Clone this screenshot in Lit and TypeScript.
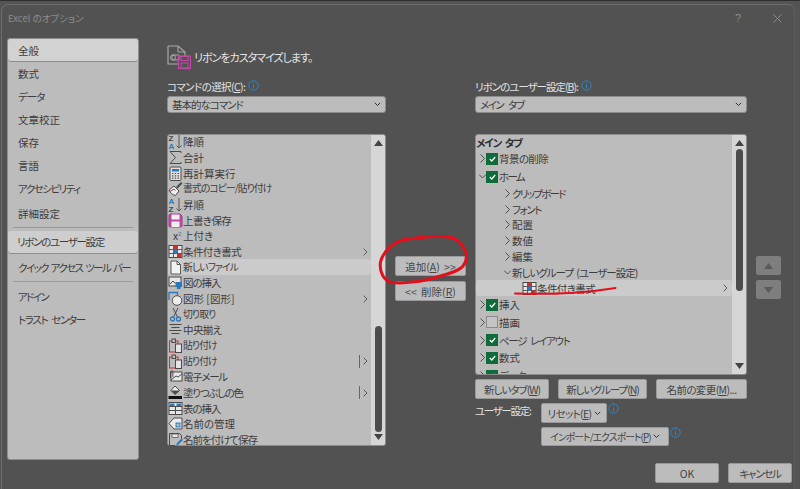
import { LitElement, html, css, svg, nothing } from "lit";
import { customElement } from "lit/decorators.js";

const B = "#2f78b8";
const R = "#c9302c";
const G = "#4a4a4a";
const P = "#c04aa6";

const ico = (body: unknown, w = 15, h = 15) =>
  html`<svg class="ic" width=${w} height=${h} viewBox="0 0 15 15" fill="none">${body}</svg>`;

const letters = (a: string, b: string) => svg`
  <text x="0.5" y="6.5" font-size="8" font-weight="700" font-family="Liberation Sans" fill=${a === "A" ? B : G}>${a}</text>
  <text x="0.5" y="14.5" font-size="8" font-weight="700" font-family="Liberation Sans" fill=${b === "A" ? B : G}>${b}</text>
  <path d="M11 1v13M8.5 11.5 11 14l2.5-2.5" stroke=${G} stroke-width="0.9"/>`;

const condGrid = svg`
  <rect x="1" y="1.5" width="13" height="12" fill="#e8e8e8" stroke=${G}/>
  <path d="M1 5.5h13M1 9.5h13M5.5 1.5v12M9.5 1.5v12" stroke=${G} stroke-width="0.9"/>
  <rect x="5.5" y="1.5" width="4" height="4" fill=${R}/>
  <rect x="5.5" y="5.5" width="4" height="4" fill=${B}/>
  <rect x="9.5" y="9.5" width="4" height="4" fill=${R}/>`;

const paste = svg`
  <rect x="1.5" y="3" width="8.5" height="11" stroke=${R} fill="none"/>
  <rect x="4" y="1" width="3.5" height="3.5" fill="#bdbdbd" stroke=${G}/>
  <rect x="7.5" y="6" width="6" height="8.5" fill="#e4e4e4" stroke=${G}/>`;

const saveIcon = svg`
  <path d="M1 2.5A1.5 1.5 0 0 1 2.5 1H12l2 2v9.500A1.500 1.500 0 0 1 12.500 14h-10A1.500 1.500 0 0 1 1 12.500Z" fill=${P} stroke="#9a3a86"/>
  <rect x="3.500" y="1.500" width="8" height="5" fill="#efefef"/>
  <rect x="3.500" y="8.500" width="8" height="5.500" fill="#efefef"/>`;

const leftItems: { t: string; i: unknown; sub?: number; hot?: boolean; k?: string }[] = [
  { t: "降順", i: ico(letters("Z", "A")) },
  { t: "合計", i: ico(svg`<path d="M13 3V1.500H2L7.500 7.500 2 13.500h11V12" stroke=${G} stroke-width="1"/>`) },
  { t: "再計算実行", i: ico(svg`<rect x="2" y="1" width="11" height="13.500" rx="1" fill="#e0e0e0" stroke=${G}/><rect x="4" y="3" width="7" height="2.500" fill=${B}/><path d="M4 7.500h7M4 9.800h7M4 12.200h7" stroke=${G} stroke-width="1.200" stroke-dasharray="1.400 1.400"/>`) },
  { t: "書式のコピー/貼り付け", k: "t7", i: ico(svg`<path d="M1 9l5-4 5 5-3.500 4.500C5 14 2 12 1 9Z" fill="#efefef" stroke=${G}/><path d="M2 10.500l4-2.500 1.500 1.500" stroke=${R}/><path d="M8 6l5-5 1.500 1.500-5 5Z" fill=${G}/>`) },
  { t: "昇順", i: ico(letters("A", "Z")) },
  { t: "上書き保存", k: "t2", i: ico(saveIcon) },
  { t: "上付き", i: html`<span class="sup">x<sup>2</sup></span>` },
  { t: "条件付き書式", k: "t2", i: ico(condGrid), sub: 1 },
  { t: "新しいファイル", k: "t7", i: ico(svg`<path d="M3 1h6l3.500 3.500V14H3Z" fill="#f2f2f2" stroke=${G} stroke-width="0.900"/><path d="M9 1v3.500h3.500" stroke=${G} stroke-width="0.900"/>`), hot: true },
  { t: "図の挿入", k: "t3", i: ico(svg`<rect x="1" y="2" width="12" height="9" fill="#e6e6e6" stroke=${G}/><path d="M2 9l3-3 2.500 2.500" stroke=${G}/><rect x="7.500" y="7" width="6.500" height="5" fill=${B}/><rect x="9" y="12" width="3.500" height="2" fill=${B}/>`) },
  { t: "図形 [図形]", i: ico(svg`<path d="M1 9V1.500h8.500V4" stroke=${B} stroke-width="1.300"/><circle cx="9" cy="9.500" r="4.800" fill="#ececec" stroke=${G}/>`), sub: 1 },
  { t: "切り取り", k: "t7", i: ico(svg`<path d="M5 1l4.500 9M10 1 5.500 10" stroke=${G}/><circle cx="4.500" cy="12" r="2" stroke=${B} stroke-width="1.300"/><circle cx="10.500" cy="12" r="2" stroke=${B} stroke-width="1.300"/>`) },
  { t: "中央揃え", k: "t2", i: ico(svg`<path d="M1.500 2.500h12M3.500 5.500h8M1.500 8.500h12M3.500 11.500h8" stroke=${G}/>`) },
  { t: "貼り付け", k: "t7", i: ico(paste) },
  { t: "貼り付け", k: "t7", i: ico(paste), sub: 2 },
  { t: "電子メール", k: "t4", i: ico(svg`<rect x="3" y="3" width="11" height="9" fill="#e8e8e8" stroke=${G}/><path d="M3 11l5-4 2 1 4-3" stroke=${G}/><path d="M2.500 9V3a1.200 1.200 0 0 1 2.400 0v5" stroke=${G}/>`) },
  { t: "塗りつぶしの色", k: "t4", i: ico(svg`<path d="M7 1l4.500 4.500L7 9.500 3 5.500Z" fill="#efefef" stroke=${G}/><path d="M3 5.500h8.500L7 9.500Z" fill=${G}/><rect x="0.500" y="11" width="13.500" height="3" fill="#111"/>`), sub: 2 },
  { t: "表の挿入", k: "t3", i: ico(svg`<rect x="1" y="1.500" width="13" height="12" fill="#e6e6e6" stroke=${G}/><rect x="2" y="2.500" width="4.500" height="2.500" fill=${B}/><rect x="8.500" y="2.500" width="4.500" height="2.500" fill=${B}/><path d="M1 5.500h13M1 9.500h13M7.500 5.500v8" stroke=${G}/>`) },
  { t: "名前の管理", i: ico(svg`<path d="M14 2H6L1 7.500 6 13h8Z" fill="#ececec" stroke=${G}/><rect x="7.500" y="6.500" width="5" height="5" fill=${B}/><path d="M10 6.500v5M7.500 9h5" stroke="#eee" stroke-width="0.700"/>`) },
  { t: "名前を付けて保存", k: "t3", i: ico(svg`<path d="M1.500 1.500h10l2 2V9M1.500 1.500V13.500H7" stroke=${G}/><rect x="4" y="2" width="6" height="3.500" fill="#e8e8e8" stroke=${G} stroke-width="0.700"/><path d="M8 14l1-3 4.500-4.500 1.500 1.500-4.500 4.500Z" fill=${B}/>`) },
];

const chev = (open = false) =>
  html`<svg class="tw" width="7" height="9" viewBox="0 0 7 9" fill="none">
    <path d=${open ? "M0 2.500 3.500 6 7 2.500" : "M1.500 0.500 5.500 4.500 1.500 8.500"} stroke="#444" stroke-width="0.900"></path>
  </svg>`;

const check = (on: boolean) =>
  on
    ? html`<span class="cb on"><svg width="7" height="6" viewBox="0 0 7 6" fill="none"><path d="M0.800 3 2.800 5 6.200 1" stroke="#fff" stroke-width="1.200"></path></svg></span>`
    : html`<span class="cb"></span>`;

const caret = html`<svg class="caret" width="7" height="5" viewBox="0 0 7 5" fill="none"><path d="M0.800 0.800 3.500 3.500 6.200 0.800" stroke="#333" stroke-width="1"></path></svg>`;
const info = html`<svg class="info" width="11" height="11" viewBox="0 0 11 11" fill="none"><circle cx="5.500" cy="5.500" r="4.700" stroke="#2b88d0"></circle><path d="M5.500 2.500v1M5.500 4.800v3.500" stroke="#2b88d0" stroke-width="1.100"></path></svg>`;
const subArrow = html`<svg class="sub" width="5" height="8" viewBox="0 0 5 8" fill="none"><path d="M0.700 0.700 4 4 0.700 7.300" stroke="#5a5a5a"></path></svg>`;

const up = html`<svg width="9" height="6" viewBox="0 0 9 6"><path d="M4.500 0 9 6H0Z" fill="#444"></path></svg>`;
const down = html`<svg width="9" height="6" viewBox="0 0 9 6"><path d="M4.500 6 9 0H0Z" fill="#444"></path></svg>`;

@customElement("app-root")
export class AppRoot extends LitElement {
  static styles = css`
    :host {
      display: block;
      width: 800px;
      height: 489px;
      background: #545454;
      border-top: 1px solid #2e2e2e;
      box-sizing: border-box;
      overflow: hidden;
      font-family: "Noto Sans CJK JP", "Noto Sans", sans-serif;
      font-feature-settings: "palt";
      font-size: 10.5px;
      color: #3c3c3c;
    }
    .t2 { letter-spacing: -0.6px; word-spacing: 2px; }
    .t3 { letter-spacing: -1px; word-spacing: 2px; }
    .t4 { letter-spacing: -1.3px; word-spacing: 3px; }
    .t5 { letter-spacing: -1.5px; word-spacing: 4px; }
    .t6 { letter-spacing: -1.7px; word-spacing: 4px; }
    .t7 { font-size: 9.8px; letter-spacing: -0.9px; word-spacing: 3px; }
    .t8 { letter-spacing: -1.6px; word-spacing: 2px; }
    .stage { position: relative; height: 488px; padding: 3px 5px 0 1px; box-sizing: border-box; }
    .dialog {
      height: 485px;
      box-sizing: border-box;
      background: #525252;
      border: 1px solid #6c6c6c;
      border-bottom: 0;
      border-right-color: #5e5e5e;
      border-radius: 7px 7px 0 0;
    }
    .title { height: 33px; display: flex; align-items: center; padding: 0 12px 0 6px; color: #8c8c8c; font-size: 9.5px; }
    .title .name { flex: 1; padding-bottom: 8px; }
    .title .help { font-family: "Liberation Sans", sans-serif; font-size: 11px; margin-right: 32px; padding-bottom: 8px; }
    .title svg { margin-bottom: 7px; }
    .body { display: flex; height: 422px; padding-left: 5px; }
    .nav {
      width: 132px; box-sizing: border-box; background: #bcbcbc;
      border: 1px solid #8e8e8e; border-radius: 3px;
      display: flex; flex-direction: column; flex: none;
    }
    .nav .it { height: 23px; flex: none; display: flex; align-items: center; padding-left: 10px; font-size: 10.5px; white-space: pre; }
    .nav .it.sel { background: #d2d2d2; border-radius: 3px; box-shadow: 0 1px 0 #8e8e8e; height: 22px; margin-bottom: 1px; }
    .nav .gap2 { height: 2px; flex: none; }
    .nav hr { border: 0; border-top: 1px solid #9a9a9a; margin: 2px 5px 3px; width: 120px; flex: none; }
    .nav .it.sel.two { background: #cecece; height: 21.500px; margin: 0 0 3px; padding-left: 9px; }
    .main { flex: 1; padding: 5px 0 0 28px; }
    .head { height: 27px; display: flex; align-items: center; gap: 3px; color: #e6e6e6; font-size: 11px; margin-bottom: 9px; }
    .grid { display: grid; grid-template-columns: 219px 89px 272px 34px; }
    .col { display: flex; flex-direction: column; }
    .lbl { height: 15px; display: flex; align-items: center; gap: 3px; color: #e2e2e2; font-size: 10.5px; margin-bottom: 2px; }
    .lbl u, .btn u { text-underline-offset: 1px; }
    .info { flex: none; margin-bottom: 3px; }
    .select {
      height: 17px; box-sizing: border-box; background: #bcbcbc; border: 1px solid #8c8c8c; border-radius: 3px;
      display: flex; align-items: center; justify-content: space-between; padding: 0 4px; margin-bottom: 21px; font-size: 10.5px;
    }
    .list {
      background: #bcbcbc; border: 1px solid #8c8c8c; border-radius: 3px; box-sizing: border-box;
      display: flex; overflow: hidden;
    }
    .list.l { height: 312px; overflow: visible; }
    .list.r { height: 241px; }
    .rows { flex: 1; min-width: 0; overflow: hidden; }
    .l .rows { overflow: visible; }
    .l .rows > div:first-child { margin-top: -1px; }
    .row { height: 15.680px; line-height: 11px; display: flex; align-items: center; font-size: 10.5px; white-space: nowrap; position: relative; }
    .ic { flex: none; margin-right: 0; overflow: visible; }
    .sup { width: 15px; flex: none; font-family: "Liberation Sans", sans-serif; font-size: 10px; padding-left: 5px; box-sizing: border-box; color: #333; }
    .sup sup { font-size: 6px; color: #2f78b8; }
    .hot { background: #cbcbcb; border-radius: 3px; }
    .grow { flex: 1; }
    .sub { flex: none; margin-right: 3px; }
    .split { width: 1px; height: 13px; background: #666; margin-right: 3px; }
    .sb { width: 14px; flex: none; background: #d6d6d6; display: flex; flex-direction: column; align-items: center; padding: 5px 0; box-sizing: border-box; border-radius: 0 2px 2px 0; }
    .thumb { width: 7px; border-radius: 4px; background: #4c4c4c; }
    .l .thumb { height: 106px; margin-top: 180px; }
    .r .thumb { height: 142px; margin-top: 3px; }
    .sb svg:last-child { margin-top: auto; }
    .tree { font-size: 10.5px; }
    .tree .row { padding-left: 1px; }
    .tree .bold { height: 15px; font-weight: 700; color: #2e2e2e; padding-left: 0; }
    .tree .c { height: 17.700px; }
    .tree .n { height: 15.800px; padding-left: 28px; }
    .tree .tw { margin-left: 2px; margin-right: 0; flex: none; }
    .tree .n .tw { margin: 0 1px 0 0; }
    .cb { width: 10px; height: 10px; border: 1px solid #8a8a8a; margin-right: 1px; flex: none; background: #c4c4c4; display: flex; align-items: center; justify-content: center; }
    .cb.on { background: #0f6b3a; border-color: #0f6b3a; }
    .tree .leaf { height: 15.800px; padding-left: 46px; background: #cbcbcb; border-radius: 3px; }
    .tree .leaf .sub { margin-right: 4px; }
    .tree .leaf .ic { margin-right: 0; }
    .mid { padding: 177px 0 0 9px; display: flex; flex-direction: column; gap: 5px; }
    .side { padding: 177px 0 0 9px; display: flex; flex-direction: column; gap: 5px; }
    .btn {
      height: 20px; box-sizing: border-box; background: #bcbcbc; border: 1px solid #9a9a9a; border-radius: 2px;
      display: flex; align-items: center; justify-content: center; gap: 2px; font-size: 10.5px; white-space: pre; color: #444;
      flex: none;
    }
    .mid .btn { width: 71px; }
    .mid .btn span { word-spacing: 2px; }
    .side .btn { width: 25px; height: 19px; background: #7e7e7e; border-color: #7e7e7e; }
    .side .btn svg path { fill: #5a5a5a; }
    .tabs { display: flex; justify-content: space-between; margin-top: 4px; }
    .w74 { width: 74px; }
    .w89 { width: 89px; }
    .w91 { width: 91px; }
    .w66 { width: 66px; }
    .w128 { width: 128px; height: 19px; }
    .cust { display: grid; grid-template-columns: 66px 1fr; margin-top: 4px; row-gap: 4px; }
    .cust .lab { color: #e2e2e2; font-size: 10.5px; height: 14px; white-space: nowrap; }
    .line { display: flex; gap: 1px; grid-column: 2; }
    .foot { display: flex; justify-content: flex-end; gap: 9px; padding: 3px 2px 0 0; }
    .foot .btn { width: 64px; }
    .ink { position: absolute; left: 0; top: -1px; pointer-events: none; }
  `;

  render() {
    const nav: [string, string][] = [["数式", ""], ["データ", "t3"], ["文章校正", ""], ["保存", ""], ["言語", ""], ["アクセシビリティ", "t5"]];
    return html`
      <div class="stage">
        <div class="dialog">
          <div class="title">
            <span class="name">Excel のオプション</span>
            <span class="help">?</span>
            <svg width="9" height="9" viewBox="0 0 9 9" fill="none"><path d="M0.500 0.500l8 8M8.500 0.500l-8 8" stroke="#8c8c8c"></path></svg>
          </div>
          <div class="body">
            <div class="nav">
              <div class="it sel">全般</div>
              ${nav.map(([n, k]) => html`<div class="it ${k}">${n}</div>`)}
              <div class="gap2"></div>
              <div class="it">詳細設定</div>
              <hr />
              <div class="it sel two t4">リボンのユーザー設定</div>
              <div class="it t8">クイック アクセス ツール バー</div>
              <hr />
              <div class="it t6">アドイン</div>
              <div class="it t4">トラスト センター</div>
            </div>
            <div class="main">
              <div class="head">
                <svg width="24" height="27" viewBox="0 0 24 27" fill="none">
                  <path d="M1 3V21H11M1 3H11L18 9V14" stroke="#a8a8a8" stroke-width="1.200"></path>
                  <path d="M11 3V9H18" stroke="#a8a8a8"></path>
                  <path d="M5 12h7v5H5Z" stroke="#a8a8a8"></path>
                  <circle cx="6" cy="14.500" r="2.500" stroke="#a8a8a8"></circle>
                  <rect x="11.500" y="13" width="12" height="12.500" stroke="#c04aa6" stroke-width="1.300"></rect>
                  <rect x="14" y="13.500" width="7" height="4" stroke="#c04aa6"></rect>
                  <rect x="14" y="20" width="7" height="5" stroke="#c04aa6"></rect>
                </svg>
                <span class="t3">リボンをカスタマイズします。</span>
              </div>
              <div class="grid">
                <div class="col">
                  <div class="lbl"><span class="t2">コマンドの選択(<u>C</u>):</span>${info}</div>
                  <div class="select"><span class="t3">基本的なコマンド</span>${caret}</div>
                  <div class="list l">
                    <div class="rows">
                      ${leftItems.map(
                        (it) => html`<div class="row ${it.hot ? "hot" : ""}">
                          ${it.i}<span class=${it.k ?? ""}>${it.t}</span><span class="grow"></span>
                          ${it.sub === 2 ? html`<span class="split"></span>` : nothing}
                          ${it.sub ? subArrow : nothing}
                        </div>`,
                      )}
                    </div>
                    <div class="sb">${up}<div class="thumb"></div>${down}</div>
                  </div>
                </div>
                <div class="mid">
                  <div class="btn"><span>追加(<u>A</u>) &gt;&gt;</span></div>
                  <div class="btn"><span>&lt;&lt; 削除(<u>R</u>)</span></div>
                </div>
                <div class="col">
                  <div class="lbl"><span class="t3">リボンのユーザー設定(<u>B</u>):</span>${info}</div>
                  <div class="select"><span class="t5">メイン タブ</span>${caret}</div>
                  <div class="list r">
                    <div class="rows tree">
                      <div class="row bold"><span class="t3">メイン タブ</span></div>
                      <div class="row c">${chev()}${check(true)}<span class="t2">背景の削除</span></div>
                      <div class="row c">${chev(true)}${check(true)}<span class="t6">ホーム</span></div>
                      ${[["クリップボード", "t6"], ["フォント", "t4"], ["配置", ""], ["数値", ""], ["編集", ""]].map(
                        ([t, k]) => html`<div class="row n">${chev()}<span class=${k}>${t}</span></div>`,
                      )}
                      <div class="row n">${chev(true)}<span class="t3">新しいグループ (ユーザー設定)</span></div>
                      <div class="row leaf">${ico(condGrid)}<span class="t2">条件付き書式</span><span class="grow"></span>${subArrow}</div>
                      <div class="row c">${chev()}${check(true)}挿入</div>
                      <div class="row c">${chev()}${check(false)}描画</div>
                      <div class="row c">${chev()}${check(true)}<span class="t4">ページ レイアウト</span></div>
                      <div class="row c">${chev()}${check(true)}数式</div>
                      <div class="row c">${chev()}${check(true)}<span class="t3">データ</span></div>
                    </div>
                    <div class="sb">${up}<div class="thumb"></div>${down}</div>
                  </div>
                  <div class="tabs">
                    <div class="btn w74"><span class="t3">新しいタブ(<u>W</u>)</span></div>
                    <div class="btn w89"><span class="t3">新しいグループ(<u>N</u>)</span></div>
                    <div class="btn w91"><span class="t2">名前の変更(<u>M</u>)...</span></div>
                  </div>
                  <div class="cust">
                    <div class="lab"><span class="t4">ユーザー設定:</span></div>
                    <div class="line"><div class="btn w66"><span class="t2">リセット(<u>E</u>)</span>${caret}</div>${info}</div>
                    <div class="line"><div class="btn w128"><span class="t7">インポート/エクスポート(<u>P</u>)</span>${caret}</div>${info}</div>
                  </div>
                </div>
                <div class="side">
                  <div class="btn">${up}</div>
                  <div class="btn">${down}</div>
                </div>
              </div>
            </div>
          </div>
          <div class="foot">
            <div class="btn">OK</div>
            <div class="btn"><span class="t4">キャンセル</span></div>
          </div>
        </div>
        <svg class="ink" width="800" height="489" viewBox="0 0 800 489" fill="none">
          <path d="M453 238C440 235 418 237 403 240C392 243 383 252 380.500 262C379 272 384 281 392 282.500C405 284 425 281 437 277C448 274 459 271 463 266C468 260 467 252 463 247C460 242 457 239 452 237.500" stroke="#e3101c" stroke-width="3" stroke-linecap="round"></path>
          <path d="M515 293.500C535 294 555 294 570 293C585 292 600 290.500 615.500 288" stroke="#e3101c" stroke-width="2" stroke-linecap="round"></path>
        </svg>
      </div>
    `;
  }
}
